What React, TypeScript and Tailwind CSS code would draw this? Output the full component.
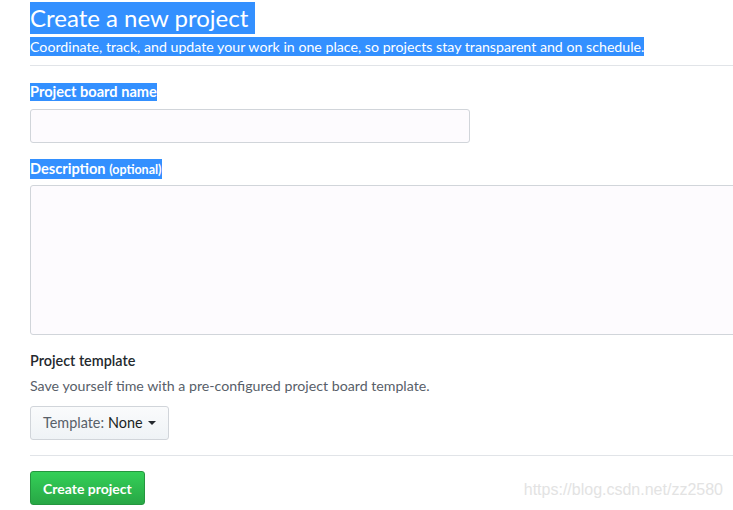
export default function App() {
  return (
    <div className="relative w-[733px] h-[510px] overflow-hidden bg-white font-['Lato',sans-serif] text-[#24292e]">
      <div className="w-[780px] pl-[30px] pt-[2px]">
        {/* Subhead (selected text) */}
        <div className="border-b border-[#e1e4e8] pb-[9px]">
          <h1 className="h-[32px] text-[24px] font-normal leading-[32px]">
            <span className="inline-block bg-[#3390ff] pr-[7px] text-white">Create a new project</span>
          </h1>
          <p className="mt-[3px] h-[19px] text-[14.2px] leading-[19px]">
            <span className="inline-block bg-[#3390ff] text-white">
              Coordinate, track, and update your work in one place, so projects stay transparent and on schedule.
            </span>
          </p>
        </div>

        {/* Name */}
        <div className="mt-[17px] h-[18px] text-[14.6px] font-bold leading-[18px]">
          <span className="inline-block bg-[#3390ff] text-white">Project board name</span>
        </div>
        <div className="mt-[8px] h-[34px] w-[440px] rounded-[3px] border border-[#d1d5da] bg-[#fdfbfe]" />

        {/* Description */}
        <div className="mt-[16px] h-[19px] text-[14.6px] font-bold leading-[19px]">
          <span className="inline-block bg-[#3390ff] text-white">
            Description <span className="text-[12.5px]">(optional)</span>
          </span>
        </div>
        <div className="mt-[7px] h-[150px] w-[760px] rounded-[3px] border border-[#d1d5da] bg-[#fdfbfe]" />

        {/* Template */}
        <div className="mt-[16px] text-[14.4px] font-semibold leading-[20px]">Project template</div>
        <div className="mt-[5px] text-[14.2px] leading-[20px] text-[#586069]">
          Save yourself time with a pre-configured project board template.
        </div>
        <button
          type="button"
          className="mt-[10px] flex h-[34px] items-center gap-[4px] rounded-[3px] border border-[#d1d5da] bg-gradient-to-b from-[#fafbfc] to-[#eff3f6] px-[12px] text-[14.4px]"
        >
          <span className="text-[#586069]">Template:</span>
          <span className="text-[#1b1f23]">None</span>
          <span className="ml-[1px] h-0 w-0 border-x-[4px] border-t-[4px] border-x-transparent border-t-[#24292e]" />
        </button>

        <div className="mt-[15px] border-b border-[#e1e4e8]" />

        <button
          type="button"
          className="mt-[15px] h-[34px] rounded-[3px] border border-[#25963f] bg-gradient-to-b from-[#34d058] to-[#28a745] px-[12px] text-[14px] font-bold text-white"
        >
          Create project
        </button>
      </div>

      {/* watermark */}
      <div className="absolute bottom-[8px] right-[10px] font-['Liberation_Sans',sans-serif] text-[16px] text-[#e3e3e3]">
        https://blog.csdn.net/zz2580
      </div>
    </div>
  );
}
